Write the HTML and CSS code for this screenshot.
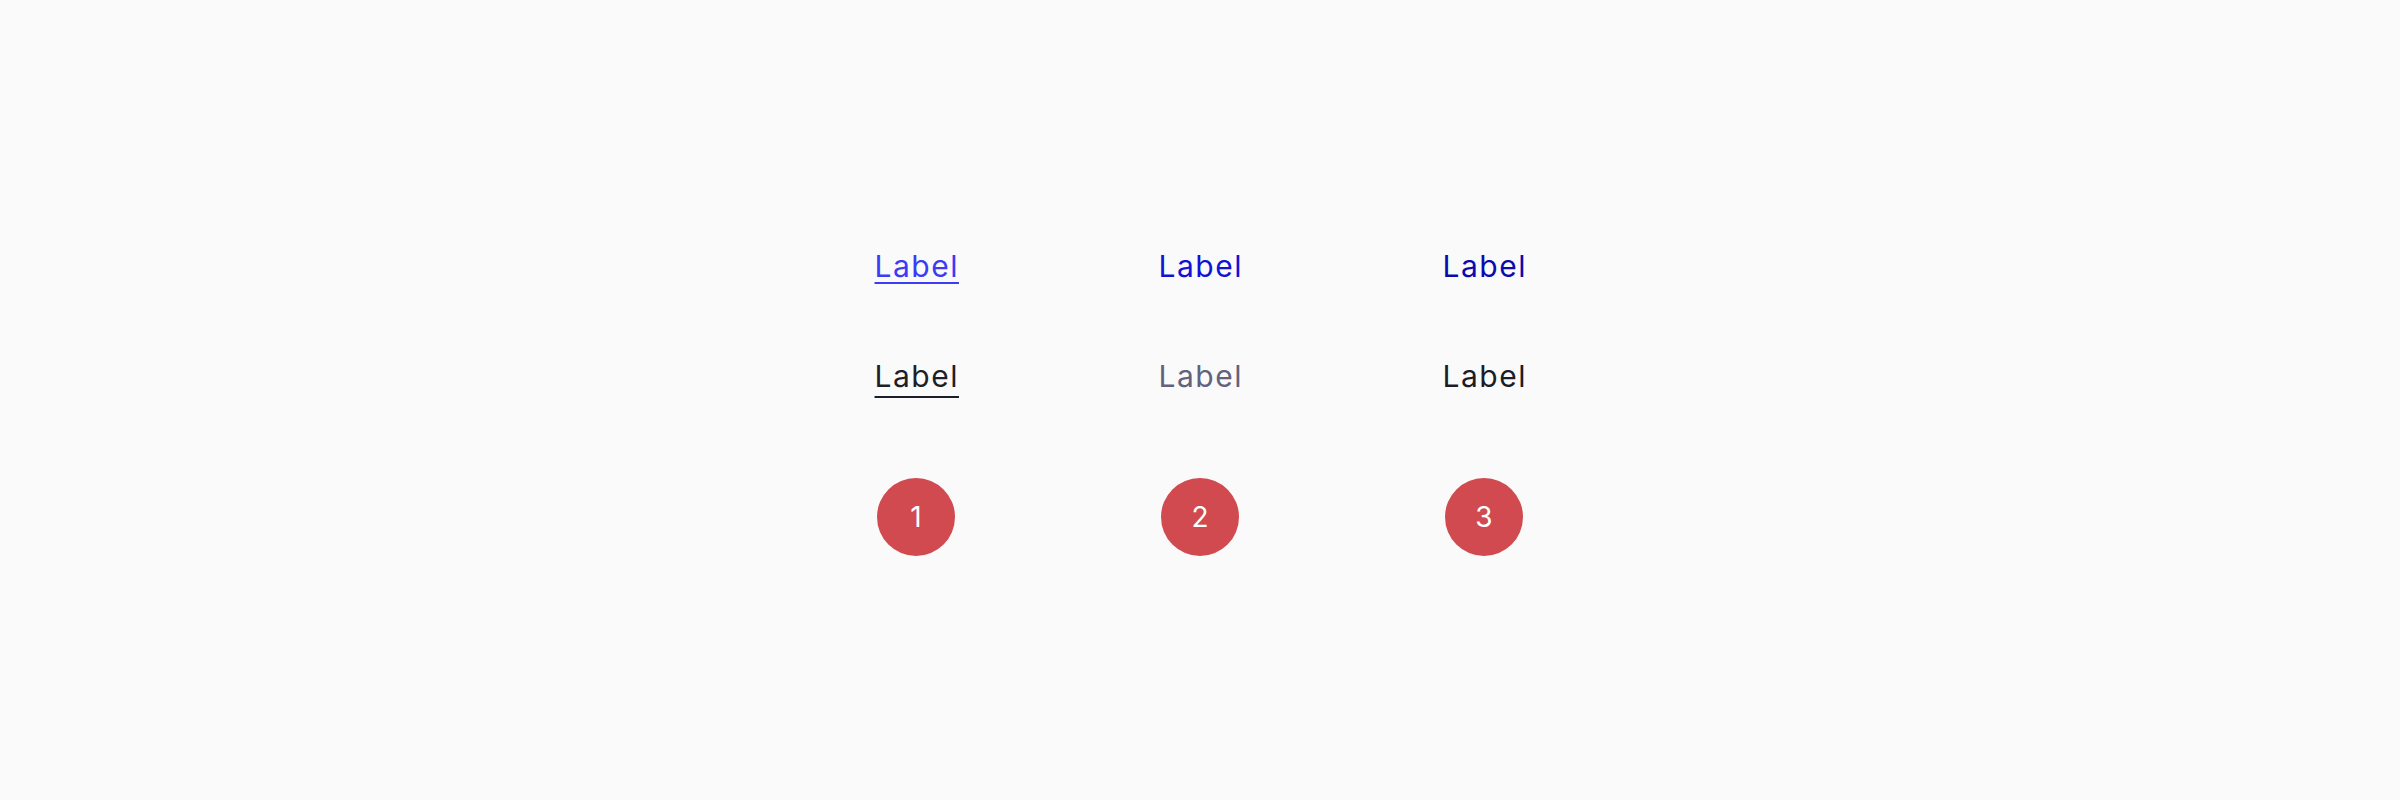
FILE: index.html
```html
<!DOCTYPE html>
<html lang="en">
<head>
    <meta charset="UTF-8">
    <meta name="viewport" content="width=device-width, initial-scale=1.0">
    <title>Link states</title>
    <link rel="stylesheet" href="styles.css">
</head>
<body>
    <div class="board">
        <!-- row 1: link states -->
        <div class="cell"><a class="link link-hover" href="#">Label</a></div>
        <div class="cell"><a class="link link-default" href="#">Label</a></div>
        <div class="cell"><a class="link link-active" href="#">Label</a></div>

        <!-- row 2: neutral states -->
        <div class="cell"><span class="plain plain-focus">Label</span></div>
        <div class="cell"><span class="plain plain-muted">Label</span></div>
        <div class="cell"><span class="plain plain-dark">Label</span></div>

        <!-- row 3: step markers -->
        <div class="cell cell-step"><span class="step">1</span></div>
        <div class="cell cell-step"><span class="step">2</span></div>
        <div class="cell cell-step"><span class="step">3</span></div>
    </div>
</body>
</html>
```

FILE: styles.css
```css
body {
    margin: 0;
    background-color: #fafafa;
    font-family: Inter, "Noto Sans", sans-serif;
}

.board {
    display: grid;
    grid-template-columns: repeat(3, 284px);
    grid-template-rows: 40px 40px auto;
    row-gap: 70px;
    justify-content: center;
    padding-top: 246px;
}

.cell {
    display: flex;
    justify-content: center;
    align-items: center;
}

.cell-step {
    padding-top: 12px;
}

.link,
.plain {
    font-size: 30px;
    line-height: 40px;
    letter-spacing: 1.5px;
    padding-left: 1.5px;
    text-decoration: none;
}

.link-hover {
    color: #3c3cf4;
    text-decoration: underline;
    text-decoration-thickness: 2px;
    text-underline-offset: 5px;
}

.link-default {
    color: #1212d6;
}

.link-active {
    color: #0a0aae;
}

.plain-focus {
    color: #1e1e2a;
    text-decoration: underline;
    text-decoration-thickness: 2px;
    text-underline-offset: 9px;
}

.plain-muted {
    color: #62627f;
}

.plain-dark {
    color: #1c1c28;
}

.step {
    display: flex;
    justify-content: center;
    align-items: center;
    flex-shrink: 0;
    width: 78px;
    height: 78px;
    border-radius: 50%;
    background-color: #d04a4f;
    color: #ffffff;
    font-size: 28px;
}
```
